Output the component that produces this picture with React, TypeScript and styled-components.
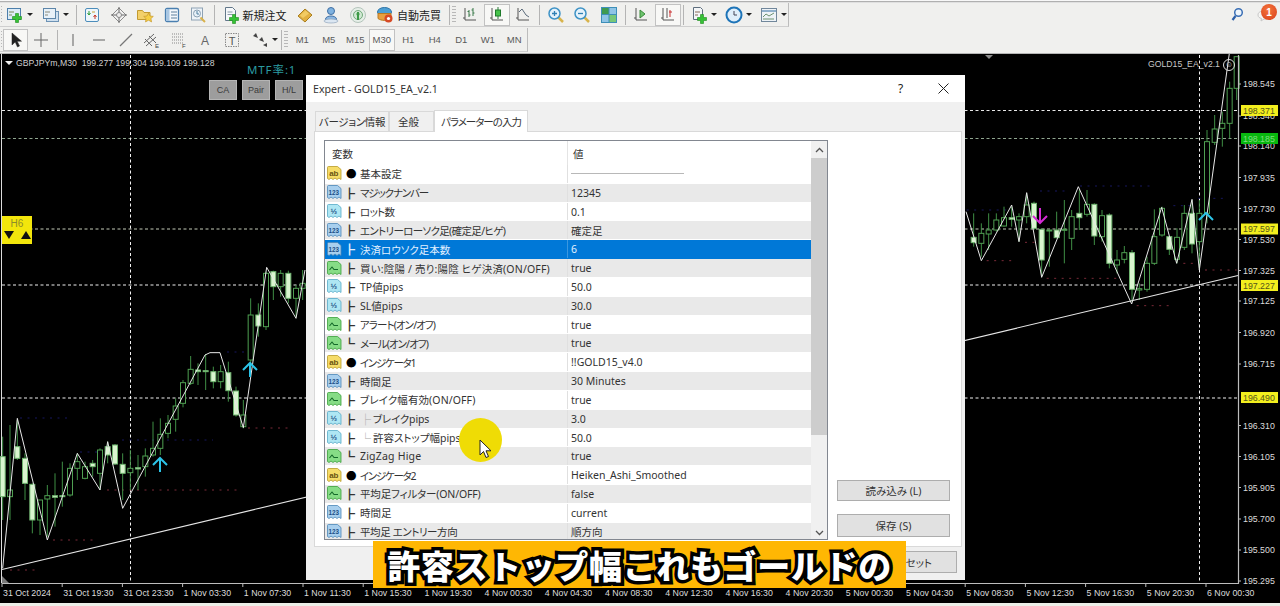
import React from "react";
import styled, { createGlobalStyle } from "styled-components";

const Global = createGlobalStyle`
  html, body { margin: 0; padding: 0; background: #000; }
  #root { width: 1280px; height: 606px; overflow: hidden; }
`;

const UI = `"Noto Sans", "Noto Sans CJK JP", sans-serif`;

const Root = styled.div`
  position: relative; width: 1280px; height: 606px; overflow: hidden;
  display: flex; flex-direction: column; background: #000; font-family: ${UI};
  font-feature-settings: "palt";
`;
const Bars = styled.header`
  height: 53px; flex: none; box-sizing: border-box; background: #f0f0ee;
  border-top: 1px solid #f8f8f8; display: flex; flex-direction: column;
`;
const TopEdge = styled.div`height: 2px; flex: none; background: #b0b0b0; border-bottom: 1px solid #e0e0e0; box-sizing: border-box;`;
const Row1 = styled.div`height: 24px; flex: none; display: flex; align-items: center; position: relative;`;
const Row2 = styled.div`height: 24px; flex: none; margin-top: 1px; display: flex; align-items: center;`;
const Group = styled.div<{ $w: number }>`
  width: ${p => p.$w}px; height: 100%; flex: none; box-sizing: border-box; display: flex; align-items: center;
  border-right: 1px solid #bcbcbc; border-bottom: 1px solid #cfcfcf;
`;
const Grip = styled.div<{ $w?: number }>`
  width: ${p => p.$w ?? 4}px; height: 18px; flex: none; box-sizing: border-box; margin: 0 1px 0 1px;
  background: repeating-linear-gradient(#b8b8b8 0 1px, transparent 1px 3px);
`;
const Sep = styled.div<{ $w: number }>`
  width: ${p => p.$w}px; flex: none; height: 20px; display: flex; justify-content: center;
  &::before { content: ""; width: 1px; height: 100%; background: #b4b4b4; }
`;
const Tool = styled.div<{ $w?: number; $active?: boolean }>`
  width: ${p => p.$w ?? 26.5}px; height: 22px; flex: none; box-sizing: border-box;
  display: flex; align-items: center; justify-content: center;
  background: ${p => (p.$active ? "#f8f8f6" : "transparent")};
  border: 1px solid ${p => (p.$active ? "#c2c2c2" : "transparent")};
  color: #5a5a5a; font-size: 9.5px; font-family: "Liberation Sans", sans-serif;
`;
const Drop = styled.div<{ $w?: number; $pad: number }>`
  width: ${p => p.$w ?? 35}px; height: 22px; flex: none; box-sizing: border-box; padding-left: ${p => p.$pad}px;
  display: flex; align-items: center; gap: 1px;
  &::after { content: ""; border: 3px solid transparent; border-top: 3px solid #222; border-bottom: 0; margin-left: 2px; }
`;
const TextTool = styled.div<{ $w: number }>`
  width: ${p => p.$w}px; height: 22px; flex: none; box-sizing: border-box; padding-left: 5px;
  display: flex; align-items: center; gap: 3px; color: #222; font-size: 11px; letter-spacing: 0;
  font-family: "Noto Sans CJK JP", sans-serif; font-feature-settings: normal;
`;
const Notify = styled.div`margin-left: auto; padding-right: 6px; display: flex; align-items: center; gap: 9px;`;
const Badge = styled.div`
  position: absolute; right: 3px; top: 1px; width: 16px; height: 16px; border-radius: 50%;
  background: radial-gradient(circle at 45% 35%, #f4743c, #d8401a); color: #fff; font-size: 10px; font-weight: 700;
  display: flex; align-items: center; justify-content: center; font-family: "Liberation Sans", sans-serif;
`;

const ChartBox = styled.main`flex: 1; min-height: 0; position: relative; background: #000; border-top: 1px solid #b5b5b5;`;
const Plot = styled.svg`display: block; width: 1280px; height: 549px;`;
const Status = styled.footer`height: 3px; flex: none; background: #ecefe8;`;

const Axis = styled.text<{ $c?: string }>`
  font-family: "Liberation Sans", sans-serif; font-size: 8.8px; fill: ${p => p.$c ?? "#dcdcdc"};
`;

const Legend = styled.div`
  position: absolute; left: 16px; top: 57px; color: #cfcfcf; font-size: 8.7px; white-space: pre;
  font-family: "Liberation Sans", sans-serif; line-height: 12px;
  &::before { content: ""; position: absolute; left: -11px; top: 4px; border: 4px solid transparent; border-top: 4px solid #eee; border-bottom: 0; }
`;
const Tag = styled.div`
  position: absolute; left: 1148px; top: 58px; color: #c8c8c8; font-size: 8.7px; line-height: 12px;
  font-family: "Liberation Sans", sans-serif;
`;
const Smile = styled.div`
  position: absolute; left: 1223px; top: 59px; width: 10px; height: 10px; border: 1px solid #ddd; border-radius: 50%;
  color: #ddd; font-size: 8px; line-height: 10px; text-align: center; font-family: "Liberation Sans", sans-serif;
`;
const Mtf = styled.div`
  position: absolute; left: 247px; top: 62px; color: #2b9ba0; font-size: 11.5px; line-height: 16px; letter-spacing: .9px;
  font-family: "Noto Sans", "Noto Sans CJK JP", sans-serif;
`;
const ChipRow = styled.div`position: absolute; left: 209px; top: 80px; display: flex; gap: 5px;`;
const Chip = styled.div`
  width: 28px; height: 20px; box-sizing: border-box; background: #9d9d9d; border: 1px solid #b5b5b5;
  color: #3a3a3a; font-size: 9px; display: flex; align-items: center; justify-content: center;
  font-family: "Liberation Sans", sans-serif;
`;
const H6 = styled.div`
  position: absolute; left: 2px; top: 216px; width: 30px; height: 28px; background: #f3e60c;
  display: flex; flex-direction: column; align-items: center; color: #8c8c2a; font-size: 10px; line-height: 15px;
  font-family: "Liberation Sans", sans-serif;
`;
const H6Arrows = styled.div`display: flex; gap: 7px;`;
const Down = styled.i`border: 5px solid transparent; border-top: 8px solid #111; border-bottom: 0;`;
const Up = styled.i`border: 5px solid transparent; border-bottom: 8px solid #111; border-top: 0;`;

const Dialog = styled.section`
  position: absolute; left: 306px; top: 75px; width: 659px; height: 505px; background: #f0f0f0;
  display: flex; flex-direction: column; box-sizing: border-box;
`;
const TitleBar = styled.div`
  height: 27px; flex: none; background: #fff; display: flex; align-items: center; padding: 0 16px 0 7px;
  font-size: 10.6px; color: #333;
`;
const TitleText = styled.div`flex: 1;`;
const Help = styled.div`font-size: 12px; width: 40px; color: #222;`;
const Tabs = styled.div`height: 22px; margin-top: 7px; padding-left: 9px; flex: none; display: flex; align-items: flex-end;`;
const TabItem = styled.div<{ $active?: boolean; $w: number; $ls?: number; $pr?: number }>`
  width: ${p => p.$w}px; height: ${p => (p.$active ? 22 : 20)}px; box-sizing: border-box; flex: none;
  background: ${p => (p.$active ? "#fff" : "#f0f0f0")}; border: 1px solid #d9d9d9; border-bottom: 0;
  margin-bottom: ${p => (p.$active ? -1 : 0)}px; position: relative; z-index: ${p => (p.$active ? 1 : 0)};
  padding-right: ${p => p.$pr ?? 0}px; letter-spacing: ${p => p.$ls ?? 0}px;
  display: flex; align-items: center; justify-content: center; font-size: 10.5px; color: #333;
`;
const Panel = styled.div`
  height: 416px; flex: none; margin: 0 3px 0 8px; box-sizing: border-box; background: #fff; border: 1px solid #d9d9d9;
  padding: 8px 9px 6px 9px; display: flex; gap: 9px;
`;
const Table = styled.div`
  width: 504px; flex: none; box-sizing: border-box; border: 1px solid #828790; overflow: hidden;
  display: grid; grid-template-columns: 486px 16px;
`;
const HeadRow = styled.div`
  height: 24px; display: grid; grid-template-columns: 242px 244px; font-size: 10.5px; color: #333; background: #fff;
`;
const HeadCell = styled.div<{ $v?: boolean }>`
  display: flex; align-items: center; padding-left: ${p => (p.$v ? 5 : 7)}px; box-sizing: border-box;
  border-left: ${p => (p.$v ? "1px solid #e4e4e4" : "0")};
`;
const Row = styled.div<{ $alt?: boolean; $sel?: boolean }>`
  height: 18.84px; box-sizing: border-box; display: grid; grid-template-columns: 242px 244px;
  background: ${p => (p.$sel ? "#0078d7" : p.$alt ? "#e9e9e9" : "#fff")};
  border-bottom: 1px solid ${p => (p.$sel ? "#0078d7" : "#fff")};
  color: ${p => (p.$sel ? "#e2f0ff" : "#333")}; font-size: 10.5px;
`;
const NameCell = styled.div`display: flex; align-items: center; padding-left: 2px; white-space: nowrap; overflow: hidden; position: relative;`;
const NameText = styled.span<{ $ls?: number }>`letter-spacing: ${p => p.$ls ?? 0}px;`;
const ValueCell = styled.div<{ $sel?: boolean }>`
  display: flex; align-items: center; padding-left: 3px; box-sizing: border-box; white-space: nowrap;
  border-left: 1px solid ${p => (p.$sel ? "#3a97e0" : "#e0e0e0")};
`;
const RuleValue = styled.div`width: 113px; height: 1px; background: #b8b8b8;`;
const Tree = styled.span`width: 16px; margin-left: 2px; flex: none; font-size: 11px; color: ${"inherit"}; font-feature-settings: normal;`;
const SubTree = styled.span`width: 13px; flex: none; color: #a8a8a8; font-size: 11px; font-feature-settings: normal;`;
const Dot = styled.span`width: 14px; margin-left: 4px; flex: none; font-size: 10.5px; color: #000; font-feature-settings: normal;`;
const Scroll = styled.div`
  background: #f0f0f0; display: flex; flex-direction: column; align-items: center; color: #555; position: relative;
`;
const ScrollBtn = styled.div`height: 17px; flex: none; display: flex; align-items: center; justify-content: center;`;
const Thumb = styled.div`width: 16px; height: 277px; flex: none; background: #cdcdcd;`;
const ScrollGap = styled.div`flex: 1;`;
const Side = styled.div`flex: 1; display: flex; flex-direction: column; justify-content: flex-end; gap: 13px; padding: 0 1px 3px 0;`;
const Btn = styled.div<{ $h: number }>`
  height: ${p => p.$h}px; width: 113px; box-sizing: border-box; background: #e1e1e1; border: 1px solid #adadad;
  display: flex; align-items: center; justify-content: center; font-size: 10.5px; color: #333;
`;
const Foot = styled.div`flex: 1; display: flex; justify-content: flex-end; align-items: flex-start; padding: 4px 8px 0 0;`;
const ResetBtn = styled(Btn)`padding-left: 28px;`;

const Caption = styled.div`
  position: absolute; left: 373px; top: 541px; width: 533px; height: 47px; background: #ffb703;
  display: flex; align-items: center; justify-content: center; color: #fff; font-size: 33px; font-weight: 900;
  font-family: "Noto Sans CJK JP", sans-serif; letter-spacing: .65px; white-space: nowrap; line-height: 47px;
  padding-top: 2px; box-sizing: border-box;
  font-feature-settings: normal; -webkit-text-stroke: 7px #000; paint-order: stroke fill;
`;
const Spot = styled.div`
  position: absolute; left: 459px; top: 418px; width: 43px; height: 44px; border-radius: 50%; background: #efdc05; filter: blur(.7px);
`;
const Pointer = styled.svg`position: absolute; left: 479px; top: 439px; width: 14px; height: 20px;`;

const P = ({ x, y }: { x: number; y: number }) => (
  <path d={`M${x - 1.5} ${y - 4.5}h3v3h3v3h-3v3h-3v-3h-3v-3h3z`} fill="#35c235" stroke="#1c8a1c" strokeWidth=".6" />
);
const axes = "M4 2v12h11M2 12h2";
const Ic: Record<string, React.ReactNode> = {
  newChart: <><rect x="1.5" y="2.5" width="13" height="11" fill="#dcebf7" stroke="#4d7fab" /><path d="M3 6h5M3 9h3" stroke="#7a8a5a" /><P x={11} y={12} /></>,
  profiles: <><rect x="4.5" y="5.5" width="12" height="10" fill="#cfe0ef" stroke="#6d93b5" /><rect x="1.5" y="2.5" width="12" height="10" fill="#e8f1f8" stroke="#5d86aa" /><path d="M3 6h5M3 9h3" stroke="#8a8a7a" /></>,
  market: <><rect x="2.5" y="2.5" width="13" height="13" rx="1.5" fill="#eef6fb" stroke="#4c8dbb" /><path d="M6 5v4M4.5 7 6 9l1.5-2" stroke="#2f9e3b" fill="none" /><path d="M12 13V9M10.5 11 12 9l1.5 2" stroke="#c93a2b" fill="none" /><path d="M9 6h3" stroke="#c9a33a" /></>,
  cross: <><path d="M9 2l7 7-7 7-7-7z" fill="#f2f2f2" stroke="#8c8c8c" /><path d="M9 1v16M1 9h16" stroke="#666" /><circle cx="9" cy="9" r="2.5" fill="#eee" stroke="#888" /></>,
  folder: <><path d="M1.5 4.5h5l1.5 2h6v7h-12.500z" fill="#f3d06a" stroke="#c29a30" /><path d="M12.500 7l1.500 3 3.300.4-2.400 2.200.7 3.300-3.100-1.700-3 1.700.6-3.300-2.400-2.200 3.300-.4z" fill="#f6cf44" stroke="#c79a2c" strokeWidth=".7" /></>,
  nav: <><rect x="2.500" y="2.500" width="13" height="13" rx="1.500" fill="#f4f8fc" stroke="#4a7fb0" strokeWidth="1.300" /><rect x="3" y="3" width="3.500" height="12" fill="#a9c7e3" /><path d="M8 6h6M8 9h6M8 12h6" stroke="#5c7f9c" /></>,
  tester: <><rect x="2.500" y="2" width="11" height="12" fill="#edf3f8" stroke="#8ea2b4" /><circle cx="8" cy="7.500" r="3.500" fill="#e6f0f8" stroke="#8aa0b2" /><path d="M8 5v3h2" stroke="#4f7f9f" fill="none" /><path d="M11.500 11.500l4.500 4.500" stroke="#d9b24a" strokeWidth="2" /></>,
  order: <><path d="M3.500 1.500h7l3 3v10h-10z" fill="#f6f8fa" stroke="#62778a" /><path d="M5.500 6h5M5.500 8.500h5" stroke="#8a9aa8" /><P x={12} y={13} /></>,
  gold: <><path d="M2 10 9 3l7 6-7 7z" fill="#e2b040" stroke="#a97e1e" /><path d="M4 9.500 9.500 4.500 13 7.500 7 12z" fill="#f2cb62" /></>,
  person: <><circle cx="9" cy="5" r="3.500" fill="#7fb2e0" stroke="#3f6fa3" /><path d="M3.500 13c.5-4 10.500-4 11 0v1h-11z" fill="#8cb8e4" stroke="#3f6fa3" /><ellipse cx="9" cy="15" rx="7" ry="2" fill="#dce7f2" stroke="#92a6bc" strokeWidth=".7" /></>,
  signal: <><circle cx="9" cy="9" r="7.500" fill="#e6efe8" stroke="#b4c4bb" /><circle cx="9" cy="9" r="4.500" fill="#cfe8d2" stroke="#72ab7c" /><path d="M9 6v8" stroke="#3c9a46" strokeWidth="2" /><circle cx="9" cy="8" r="1.600" fill="#3c9a46" /></>,
  auto: <><ellipse cx="8.500" cy="6" rx="7" ry="4.500" fill="#4d9fd4" stroke="#2f74a6" /><path d="M2 7.500h13v5c-3 2.500-10 2.500-13 0z" fill="#e8a040" stroke="#b97a22" /><circle cx="12.500" cy="12.500" r="4" fill="#d64a26" /><circle cx="12.500" cy="12.500" r="1.600" fill="#fff" /></>,
  bars: <><path d={axes} stroke="#555" fill="none" /><path d="M8 4v7M6.500 5.500H8M8 9h1.500M12 2v8M10.500 4H12M12 7h1.500" stroke="#3a7a4a" fill="none" /></>,
  candle: <><path d={axes} stroke="#555" fill="none" /><path d="M10 1v12" stroke="#2c7a3a" /><rect x="7.500" y="4" width="5" height="6" fill="#46c24a" stroke="#1e7a2a" /></>,
  line: <><path d={axes} stroke="#555" fill="none" /><path d="M5 6l3-3 4 6 3 2" stroke="#5a6a7a" fill="none" /></>,
  zoomIn: <><path d="M11 11l5 5" stroke="#d8b44c" strokeWidth="2.500" /><circle cx="7.500" cy="7.500" r="5.500" fill="#e4f2fb" stroke="#3f93c6" strokeWidth="1.500" /><path d="M5 7.500h5M7.500 5v5" stroke="#2f80b4" strokeWidth="1.300" /></>,
  zoomOut: <><path d="M11 11l5 5" stroke="#d8b44c" strokeWidth="2.500" /><circle cx="7.500" cy="7.500" r="5.500" fill="#e4f2fb" stroke="#3f93c6" strokeWidth="1.500" /><path d="M5 7.500h5" stroke="#2f80b4" strokeWidth="1.300" /></>,
  tile: <><rect x="1" y="1" width="16" height="16" fill="#3e8fb8" /><rect x="2" y="2" width="6.500" height="6" fill="#3f9a4f" /><rect x="9.500" y="2" width="6.500" height="6" fill="#8fc4e6" /><rect x="2" y="9" width="6.500" height="7" fill="#8fc4e6" /><rect x="9.500" y="9" width="6.500" height="7" fill="#78c878" /></>,
  shift: <><path d={axes} stroke="#555" fill="none" /><path d="M8 4l5 4-5 4z" fill="#6ec46e" stroke="#3a8a3a" /></>,
  scroll: <><path d={axes} stroke="#555" fill="none" /><path d="M8 2v10" stroke="#555" /><path d="M11 4v7" stroke="#c93030" /><path d="M10 6h3" stroke="#c93030" /></>,
  indicator: <><path d="M3.500 1.500h7l2 2v10h-9z" fill="#f4f6f8" stroke="#5e6e7e" /><path d="M5 6h5M5 9h3" stroke="#8a6a5a" /><P x={12} y={13} /></>,
  clock: <><circle cx="9" cy="9" r="7.500" fill="#dfeefa" stroke="#1d74b8" strokeWidth="2" /><path d="M9 5v4h3" stroke="#445" fill="none" /></>,
  template: <><rect x="1.500" y="2.500" width="15" height="13" fill="#eef3f7" stroke="#71879b" /><path d="M2 5h14" stroke="#8fb0cc" strokeWidth="2" /><path d="M3 11l3-3 3 2 5-3M3 13h11" stroke="#6c9270" fill="none" /></>,
  arrow: <path d="M5 2v12l3.200-3 2.300 5 2-1-2.300-4.800h4.300z" fill="#222" stroke="#222" strokeWidth=".5" />,
  plus: <path d="M9 2v14M2 9h14" stroke="#666" />,
  vline: <path d="M9 3v12" stroke="#777" strokeWidth="1.200" />,
  hline: <path d="M3 9h12" stroke="#777" strokeWidth="1.200" />,
  diag: <path d="M3 15 15 3" stroke="#777" strokeWidth="1.200" />,
  channel: <><path d="M1 12 11 3M3 15 13 6M2 8l7 7M6 5l7 7" stroke="#666" /><text x="12" y="17" fontSize="6" fill="#444" fontFamily="Liberation Sans">E</text></>,
  fib: <><path d="M2 3h11M2 6h11M2 9h11M2 12h11" stroke="#888" strokeDasharray="1 1" /><text x="12" y="17" fontSize="6" fill="#444" fontFamily="Liberation Sans">F</text></>,
  letter: <text x="9" y="14" textAnchor="middle" fontSize="12" fill="#666" fontFamily="Liberation Sans">A</text>,
  tbox: <><rect x="2.500" y="2.500" width="13" height="13" fill="none" stroke="#888" strokeDasharray="1.500 1" /><text x="9" y="13.500" textAnchor="middle" fontSize="11" fill="#555" fontFamily="Liberation Sans">T</text></>,
  marks: <><path d="M2 5l5 2-2-5zM8 9l5 2-2-5z" fill="#444" /><path d="M12 14l4-2v4z" fill="#444" /></>,
  search: <><path d="M6.500 10 3.500 14" stroke="#2c5fa8" strokeWidth="2.200" /><circle cx="9.500" cy="6.500" r="3.800" fill="#eef5fb" stroke="#3a6fb5" strokeWidth="1.500" /></>,
  bubble: <path d="M2 9c0-3 3-4 6-4s6 1 6 4-3 4-6 4l-3 2 .5-2.500C3.500 12 2 11 2 9z" fill="#f6f6f4" stroke="#c8c8c8" />,
};
const G = ({ n }: { n: string }) => <svg width="18" height="18" viewBox="0 0 18 18">{Ic[n]}</svg>;

const ParamDoc = ({ k }: { k: string }) => {
  const s: Record<string, [string, string, string]> = {
    ab: ["#f6dc68", "#b89a28", "ab"],
    n: ["#a8cfee", "#4a86b8", "123"],
    h: ["#aee6f3", "#55aac6", "½"],
    w: ["#86dc86", "#3aa03a", ""],
  };
  const [f, b, t] = s[k];
  return (
    <svg width="15" height="15" viewBox="0 0 15 15" style={{ flex: "none" }}>
      <path d="M.5 1.500a1 1 0 0 1 1-1h9l3.500 3v10l-2-1.500-2 1.500-2-1.500-2 1.500-2-1.500-2 1.500-1.500-1z" fill={f} stroke={b} strokeWidth=".8" />
      {k === "w" ? <path d="M2.500 9 5 6l2 2.500h4" stroke="#146a2a" fill="none" strokeWidth="1.100" />
        : <text x="6.800" y="10" textAnchor="middle" fontSize={k === "n" ? 6.300 : 8} fontWeight="700" fill={k === "ab" ? "#6a5310" : "#1c4f86"} fontFamily="Liberation Sans">{t}</text>}
    </svg>
  );
};

type R = { k: string; n: string; v: string; mark?: string; sub?: string; sel?: boolean; rule?: boolean; ls?: number };
const rows: R[] = [
  { k: "ab", mark: "●", n: "基本設定", v: "", rule: true },
  { k: "n", n: "マジックナンバー", v: "12345", ls: -1.1 },
  { k: "h", n: "ロット数", v: "0.1", ls: -.7 },
  { k: "n", n: "エントリーローソク足(確定足/ヒゲ)", v: "確定足", ls: -.65 },
  { k: "n", n: "決済ロウソク足本数", v: "6", sel: true },
  { k: "w", n: "買い:陰陽 / 売り:陽陰 ヒゲ決済(ON/OFF)", v: "true", ls: .17 },
  { k: "h", n: "TP値pips", v: "50.0" },
  { k: "h", n: "SL値pips", v: "30.0" },
  { k: "w", n: "アラート(オン/オフ)", v: "true", ls: -.9 },
  { k: "w", mark: "┗", n: "メール(オン/オフ)", v: "true", ls: -.9 },
  { k: "ab", mark: "●", n: "インジケータ1", v: "!!GOLD15_v4.0", ls: -1.3 },
  { k: "n", n: "時間足", v: "30 Minutes" },
  { k: "w", n: "ブレイク幅有効(ON/OFF)", v: "true", ls: .1 },
  { k: "h", sub: "├", n: "ブレイクpips", v: "3.0", ls: -.2 },
  { k: "h", sub: "└", n: "許容ストップ幅pips", v: "50.0" },
  { k: "w", mark: "┗", n: "ZigZag Hige", v: "true", ls: .2 },
  { k: "ab", mark: "●", n: "インジケータ2", v: "Heiken_Ashi_Smoothed", ls: -1.3 },
  { k: "w", n: "平均足フィルター(ON/OFF)", v: "false", ls: -.15 },
  { k: "n", n: "時間足", v: "current" },
  { k: "n", n: "平均足 エントリー方向", v: "順方向", ls: -.4 },
];

type C = [number, number, number, number, number, number];
const leftCandles: C[] = [
  [8, 350, 600, 410, 530, 1], [30, 315, 600, 510, 530, 0], [52, 300, 420, 380, 415, 1], [75, 400, 540, 415, 490, 1],
  [97, 490, 640, 493, 600, 1], [120, 540, 645, 540, 600, 0], [142, 495, 650, 527, 537, 0], [165, 460, 620, 527, 532, 1],
  [187, 425, 560, 527, 530, 1], [210, 430, 530, 445, 525, 0], [232, 400, 480, 425, 445, 0], [255, 425, 478, 440, 475, 0],
  [278, 420, 470, 430, 440, 1], [300, 385, 510, 390, 460, 0], [323, 365, 430, 380, 405, 1], [345, 372, 435, 375, 432, 1],
  [368, 400, 540, 433, 460, 1], [391, 390, 510, 445, 458, 0], [414, 405, 510, 443, 447, 1], [436, 385, 470, 408, 440, 0],
  [459, 305, 410, 385, 405, 0], [481, 295, 405, 343, 385, 0], [504, 285, 355, 310, 340, 0], [527, 235, 335, 258, 298, 0],
  [549, 180, 262, 188, 250, 0], [572, 108, 195, 148, 190, 0], [594, 130, 195, 150, 155, 1], [617, 102, 210, 152, 154, 1],
  [640, 140, 205, 155, 185, 1], [662, 135, 205, 155, 185, 0], [685, 125, 245, 158, 212, 1], [708, 200, 290, 213, 285, 1],
  [730, 240, 325, 285, 320, 0], [752, -65, 130, -15, 120, 0], [775, -50, 50, -15, 18, 1], [798, -145, 30, -140, 20, 0],
  [820, -148, -60, -145, -100, 1], [842, -150, -70, -140, -100, 0], [865, -148, -50, -140, -65, 1], [888, -105, -10, -95, -65, 0],
  [908, -150, -60, -110, -95, 0],
];
const rightCandles: C[] = [
  [41, 490, 590, 562, 578, 1], [64, 520, 620, 550, 580, 0], [86, 490, 600, 540, 552, 0], [109, 490, 545, 510, 540, 0],
  [132, 470, 530, 503, 528, 0], [155, 470, 530, 503, 508, 1], [177, 490, 575, 500, 510, 0], [200, 430, 520, 465, 500, 0],
  [222, 455, 540, 460, 535, 1], [245, 535, 680, 538, 630, 1], [268, 540, 650, 540, 541, 0], [290, 485, 565, 540, 563, 1],
  [313, 450, 640, 538, 540, 0], [335, 480, 600, 500, 565, 0], [358, 420, 540, 490, 503, 1], [381, 420, 500, 463, 493, 0],
  [403, 460, 585, 463, 558, 1], [426, 480, 575, 497, 560, 0], [448, 490, 655, 495, 640, 1], [471, 600, 670, 630, 645, 0],
  [493, 588, 640, 608, 628, 0], [516, 600, 755, 608, 718, 1], [538, 700, 750, 716, 720, 0], [561, 620, 725, 640, 718, 0],
  [583, 478, 645, 560, 640, 0], [606, 470, 560, 475, 555, 0], [628, 558, 615, 560, 598, 1], [651, 535, 640, 562, 628, 0],
  [673, 465, 600, 490, 592, 0], [696, 450, 610, 490, 582, 1], [718, 450, 655, 490, 575, 0], [741, 240, 520, 275, 490, 0],
  [764, 195, 285, 237, 277, 0], [787, 185, 290, 220, 235, 0], [809, 95, 265, 115, 220, 0], [830, 20, 150, 20, 115, 0],
];
const lx = (z: number) => z / 3;
const ly = (z: number) => 320 + z / 3;
const rx = (z: number) => 960 + z / 3;
const ry = (z: number) => 50 + z / 3;

const Candles = ({ d, fx, fy }: { d: C[]; fx: (n: number) => number; fy: (n: number) => number }) => (
  <>
    {d.map(([x, wt, wb, bt, bb, bear], i) => (
      <g key={i}>
        <line x1={fx(x)} x2={fx(x)} y1={fy(wt)} y2={fy(wb)} stroke="#3f8f45" />
        <rect x={fx(x) - 2.5} y={fy(bt)} width="5" height={Math.max(fy(bb) - fy(bt), 1)}
          fill={bear ? "#d9f5cf" : "#000"} stroke={bear ? "#6fb46f" : "#4f9f52"} />
      </g>
    ))}
  </>
);
const poly = (pts: number[][], fx: (n: number) => number, fy: (n: number) => number) =>
  pts.map(([a, b]) => `${fx(a)},${fy(b)}`).join(" ");
const zzL = [[8, 745], [52, 295], [142, 660], [232, 400], [300, 510], [323, 365], [368, 565], [615, 105], [630, 98], [660, 98], [730, 323], [800, -158], [888, -5], [915, -150]];
const zzR = [[18, 485], [64, 632], [155, 465], [177, 575], [200, 428], [245, 682], [355, 410], [515, 762], [605, 472], [650, 640], [696, 448], [718, 660], [808, 10]];

const dotsRed = [[53, 93, 540], [107, 237, 490], [248, 290, 428], [10, 40, 570],
  [rx(80), rx(155), ry(632)], [rx(195), rx(225), ry(577)], [rx(260), rx(470), ry(685)], [rx(530), rx(630), ry(767)], [rx(670), rx(700), ry(640)], [rx(735), rx(830), ry(660)]];
const dotsBlue = [[20, 70, 418], [122, 213, 440], [80, 97, 452], [227, 257, 352],
  [rx(20), rx(170), ry(480)], [rx(240), rx(320), ry(423)], [rx(360), rx(580), ry(408)], [rx(640), rx(690), ry(467)], [rx(715), rx(805), ry(445)]];
const prices: [string, number][] = [["198.545", 84], ["198.340", 116], ["198.140", 146], ["197.935", 177.5], ["197.730", 208.5], ["197.530", 239.5], ["197.325", 270.5], ["197.125", 301], ["196.920", 332.5], ["196.715", 364], ["196.310", 425.5], ["196.105", 456.5], ["195.905", 487.5], ["195.700", 519], ["195.500", 550], ["195.295", 581]];
const tags: [string, number, string, string][] = [["198.371", 110, "#f2ee1e", "#55551a"], ["198.185", 138, "#08b80f", "#7fdc7f"], ["197.597", 228.5, "#f2ee1e", "#55551a"], ["197.227", 285, "#f2ee1e", "#55551a"], ["196.490", 397, "#f2ee1e", "#55551a"]];
const times = ["31 Oct 2024", "31 Oct 19:30", "31 Oct 23:30", "1 Nov 03:30", "1 Nov 07:30", "1 Nov 11:30", "1 Nov 15:30", "1 Nov 19:30", "4 Nov 00:30", "4 Nov 04:30", "4 Nov 08:30", "4 Nov 12:30", "4 Nov 16:30", "4 Nov 20:30", "5 Nov 00:30", "5 Nov 04:30", "5 Nov 08:30", "5 Nov 12:30", "5 Nov 16:30", "5 Nov 20:30", "6 Nov 00:30"];
const hLines: [number, string][] = [[110.5, "#e8e8e8"], [138.5, "#8fa58f"], [229, "#c4cbb8"], [285, "#efefef"], [398, "#f0f0f0"]];

const Chart = () => (
  <Plot viewBox="0 54 1280 549">
    <line x1="1.500" x2="1.500" y1="54" y2="583" stroke="#dcdcdc" />
    {hLines.map(([y, c]) => <line key={y} x1="2" x2="1238" y1={y} y2={y} stroke={c} strokeDasharray="3 2.500" />)}
    {[130.5, 1199.5].map(x => <line key={x} x1={x} x2={x} y1="55" y2="583" stroke="#f2f2f2" strokeDasharray="3 2.500" />)}
    {dotsRed.map(([a, b, y], i) => <line key={i} x1={a} x2={b} y1={y} y2={y} stroke="#7a2a38" strokeDasharray="2 5.500" />)}
    {dotsBlue.map(([a, b, y], i) => <line key={i} x1={a} x2={b} y1={y} y2={y} stroke="#16165e" strokeDasharray="2 5.500" />)}
    <Candles d={leftCandles} fx={lx} fy={ly} />
    <Candles d={rightCandles} fx={rx} fy={ry} />
    <line x1="2" y1="569.500" x2="1238" y2="275.500" stroke="#e6e6e6" strokeWidth="1.100" />
    <polyline points={poly(zzL, lx, ly)} fill="none" stroke="#e8e8e8" />
    <polyline points={poly(zzR, rx, ry)} fill="none" stroke="#e8e8e8" />
    <path d="M160 472v-14M153 465l7-7 7 7" fill="none" stroke="#2cc4e8" strokeWidth="2" />
    <path d="M250 377v-14M243 370l7-7 7 7" fill="none" stroke="#2cc4e8" strokeWidth="2" />
    <path d="M1040 208v15M1033 216l7 7 7-7" fill="none" stroke="#d42ad4" strokeWidth="2" />
    <path d="M1199 220l7-7 7 7" fill="none" stroke="#2cc4e8" strokeWidth="2" />
    <path d="M985 55h8l-4 4z" fill="#8a8a8a" />
    <path d="M2 576l7 7H2z" fill="#7a7a7a" />
    <path d="M1238.500 55v528.500H2" fill="none" stroke="#bdbdbd" strokeWidth="1.200" />
    {prices.map(([t, y]) => (
      <g key={t}>
        <line x1="1238" x2="1241" y1={y} y2={y} stroke="#bbb" />
        <Axis x="1243" y={y + 3.300}>{t}</Axis>
      </g>
    ))}
    {tags.map(([t, y, bg, fg]) => (
      <g key={t}>
        <rect x="1241" y={y - 5} width="37" height="11" fill={bg} />
        <Axis x="1243" y={y + 3.800} $c={fg}>{t}</Axis>
      </g>
    ))}
    {times.map((t, i) => {
      const x = 2 + i * 60.2;
      return (
        <g key={t}>
          <line x1={x} x2={x} y1="583" y2="587" stroke="#bbb" />
          <Axis x={x + 1} y="596">{t}</Axis>
        </g>
      );
    })}
  </Plot>
);

const Toolbars = () => (
  <Bars>
    <TopEdge />
    <Row1>
      <Group $w={789}>
        <Grip $w={1} />
        <Drop $pad={3}><G n="newChart" /></Drop>
        <Drop $pad={4}><G n="profiles" /></Drop>
        <Sep $w={6} />
        <Tool><G n="market" /></Tool><Tool><G n="cross" /></Tool><Tool><G n="folder" /></Tool><Tool><G n="nav" /></Tool><Tool><G n="tester" /></Tool>
        <Sep $w={5} />
        <TextTool $w={75}><G n="order" />新規注文</TextTool>
        <Tool><G n="gold" /></Tool><Tool><G n="person" /></Tool><Tool><G n="signal" /></Tool>
        <TextTool $w={76}><G n="auto" />自動売買</TextTool>
        <Sep $w={4} />
        <Grip />
        <Tool><G n="bars" /></Tool><Tool $active><G n="candle" /></Tool><Tool><G n="line" /></Tool>
        <Sep $w={6} />
        <Tool><G n="zoomIn" /></Tool><Tool><G n="zoomOut" /></Tool><Tool><G n="tile" /></Tool>
        <Sep $w={6} />
        <Tool><G n="shift" /></Tool><Tool $active><G n="scroll" /></Tool>
        <Sep $w={5} />
        <Drop $pad={4}><G n="indicator" /></Drop>
        <Drop $pad={4}><G n="clock" /></Drop>
        <Drop $pad={4}><G n="template" /></Drop>
      </Group>
      <Notify>
        <G n="search" />
        <G n="bubble" />
        <Badge>1</Badge>
      </Notify>
    </Row1>
    <Row2>
      <Group $w={528}>
        <Grip $w={1} />
        <Tool $w={25} $active><G n="arrow" /></Tool>
        <Tool><G n="plus" /></Tool>
        <Sep $w={5} />
        <Tool><G n="vline" /></Tool><Tool><G n="hline" /></Tool><Tool><G n="diag" /></Tool>
        <Tool><G n="channel" /></Tool><Tool><G n="fib" /></Tool><Tool><G n="letter" /></Tool><Tool><G n="tbox" /></Tool>
        <Drop $pad={6}><G n="marks" /></Drop>
        <Sep $w={3} />
        <Grip />
        {["M1", "M5", "M15", "M30", "H1", "H4", "D1", "W1", "MN"].map(t => <Tool key={t} $active={t === "M30"}>{t}</Tool>)}
      </Group>
    </Row2>
  </Bars>
);

const ParamDialog = () => (
  <Dialog>
    <TitleBar>
      <TitleText>Expert - GOLD15_EA_v2.1</TitleText>
      <Help>?</Help>
      <svg width="11" height="11" viewBox="0 0 11 11"><path d="M.5.5l10 10M10.500.5l-10 10" stroke="#222" /></svg>
    </TitleBar>
    <Tabs>
      <TabItem $w={74} $ls={-.3}>バージョン情報</TabItem>
      <TabItem $w={45} $pr={6}>全般</TabItem>
      <TabItem $w={94} $active $ls={-1}>パラメーターの入力</TabItem>
    </Tabs>
    <Panel>
      <Table>
        <div>
          <HeadRow><HeadCell>変数</HeadCell><HeadCell $v>値</HeadCell></HeadRow>
          {rows.map((r, i) => (
            <Row key={i} $alt={i % 2 === 1} $sel={r.sel}>
              <NameCell>
                <ParamDoc k={r.k} />
                {r.mark === "●" ? <Dot>●</Dot> : <Tree>{r.mark ?? "┣"}</Tree>}
                {r.sub && <SubTree>{r.sub}</SubTree>}
                <NameText $ls={r.ls}>{r.n}</NameText>
              </NameCell>
              <ValueCell $sel={r.sel}>{r.rule ? <RuleValue /> : r.v}</ValueCell>
            </Row>
          ))}
        </div>
        <Scroll>
          <ScrollBtn><svg width="9" height="6" viewBox="0 0 9 6"><path d="M1 5l3.500-3.500L8 5" fill="none" stroke="#555" strokeWidth="1.300" /></svg></ScrollBtn>
          <Thumb />
          <ScrollGap />
          <ScrollBtn><svg width="9" height="6" viewBox="0 0 9 6"><path d="M1 1l3.500 3.500L8 1" fill="none" stroke="#555" strokeWidth="1.300" /></svg></ScrollBtn>
        </Scroll>
      </Table>
      <Side>
        <Btn $h={21}>読み込み (L)</Btn>
        <Btn $h={23}>保存 (S)</Btn>
      </Side>
    </Panel>
    <Foot><ResetBtn $h={22}>リセット</ResetBtn></Foot>
  </Dialog>
);

export default function App() {
  return (
    <Root>
      <Global />
      <Toolbars />
      <ChartBox><Chart /></ChartBox>
      <Status />
      <Legend>GBPJPYm,M30  199.277 199.304 199.109 199.128</Legend>
      <Mtf>MTF率:1</Mtf>
      <ChipRow><Chip>CA</Chip><Chip>Pair</Chip><Chip>H/L</Chip></ChipRow>
      <H6>H6<H6Arrows><Down /><Up /></H6Arrows></H6>
      <Tag>GOLD15_EA_v2.1</Tag>
      <Smile>☺</Smile>
      <ParamDialog />
      <Spot />
      <Pointer viewBox="0 0 14 20"><path d="M1 1v15l3.500-3.500 2.500 6 2.500-1-2.500-5.700H12z" fill="#fff" stroke="#222" /></Pointer>
      <Caption>許容ストップ幅これもゴールドの</Caption>
    </Root>
  );
}
